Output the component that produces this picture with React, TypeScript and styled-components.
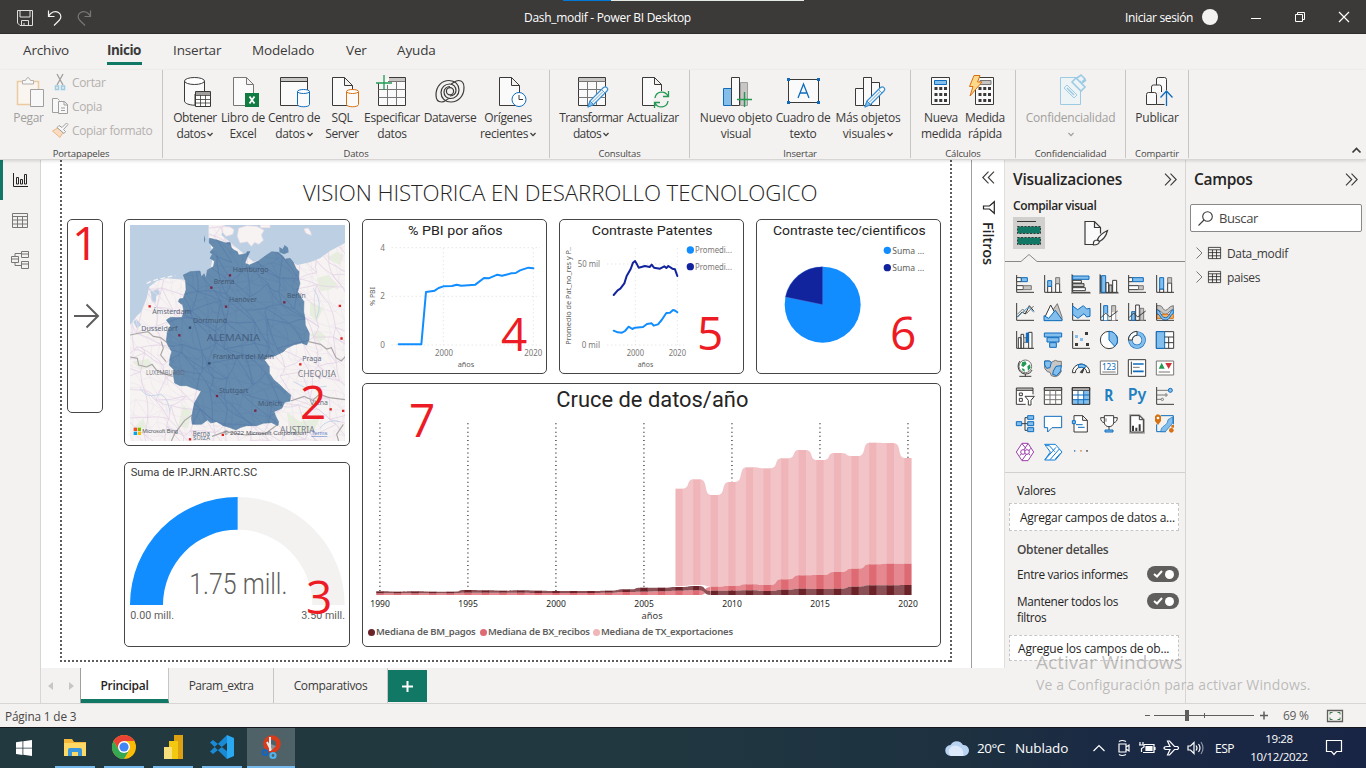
import React from 'react';
import styled, { createGlobalStyle } from 'styled-components';

const ui = '"Open Sans", "Noto Sans", sans-serif';
const din = 'Roboto, "Liberation Sans", sans-serif';
const INK = '#3b3a39';
const GREEN = '#117865';
const BLUE = '#118dff';
const NAVY = '#12239e';
const A = '#0f6cbd';
const L = '#83beec';
const G = '#797775';
const LG = '#c8c6c4';

const Global = createGlobalStyle`
  * { box-sizing: border-box; }
  body { margin: 0; overflow: hidden; font-family: ${ui}; color: #252423; background: #f3f2f1; }
  svg { display: block; flex: none; overflow: visible; }
`;

const Window = styled.div`
  position: relative; width: 1366px; height: 768px; display: flex; flex-direction: column; overflow: hidden;
`;
const Txt = styled.span<{ $s?: number; $ls?: number; $c?: string; $b?: number }>`
  font-size: ${p => p.$s ?? 12}px; letter-spacing: ${p => p.$ls ?? 0}px; color: ${p => p.$c ?? '#252423'};
  font-weight: ${p => p.$b ?? 400}; white-space: nowrap;
`;

/* ---------- title bar ---------- */
const TitleBar = styled.header`
  height: 34px; flex: none; background: #3b3a39; display: flex; align-items: center; padding: 2px 0 0 17px;
  border-bottom: 1px solid #2f2e2d; position: relative;
`;
const QuickAccess = styled.div`display: flex; gap: 14px; width: 507px;`;
const TopProgress = styled.div`
  position: absolute; top: 0; left: 563px; width: 241px; height: 1px;
  background: linear-gradient(90deg, #0078d7 48px, #e3e9e3 48px);
`;
const SignIn = styled.div`margin-left: auto; display: flex; align-items: center; gap: 9px; width: 107px;`;
const Avatar = styled.i`width: 16px; height: 16px; border-radius: 50%; background: #f3f2f1; margin-top: -1px;`;
const Controls = styled.div`display: flex; width: 134px; padding-left: 19px; gap: 34px;`;

/* ---------- ribbon ---------- */
const Tabs = styled.nav`height: 36px; flex: none; display: flex; padding-left: 23px;`;
const Tab = styled.div<{ $w: number; $on?: boolean }>`
  width: ${p => p.$w}px; margin-right: 31px; height: 31px; padding-top: 6px; line-height: 20px;
  font-size: 13.5px; letter-spacing: ${p => (p.$on ? -0.5 : -0.14)}px; white-space: nowrap;
  font-weight: ${p => (p.$on ? 700 : 400)}; color: ${INK};
  border-bottom: 3px solid ${p => (p.$on ? GREEN : 'transparent')};
`;
const Ribbon = styled.div`
  height: 90px; flex: none; display: flex; border-bottom: 1px solid #d8d6d4; position: relative; z-index: 1;
  box-shadow: 0 1px 3px rgba(0,0,0,.14);
`;
const Group = styled.section<{ $w: number; $pl?: number }>`
  width: ${p => p.$w}px; height: 88px; border-right: 1px solid #c8c6c4; display: flex; flex-direction: column;
  & > div { flex: 1; min-height: 0; display: flex; padding-left: ${p => p.$pl ?? 0}px; }
  & > footer { height: 9px; line-height: 9px; text-align: center; font-size: 9.5px; letter-spacing: -.15px; color: #484644; }
`;
const BigButton = styled.button<{ $w: number; $off?: boolean; $ls?: number }>`
  width: ${p => p.$w}px; border: 0; padding: 5px 0 0; background: none; display: flex; flex-direction: column;
  align-items: center; font: 400 12px/16px ${ui}; letter-spacing: ${p => p.$ls ?? -0.25}px; color: ${p => (p.$off ? '#a19f9d' : INK)};
  & > svg { margin-bottom: 1px; }
  & > span { display: flex; align-items: center; gap: 2px; white-space: nowrap; height: 16px; }
`;
const SmallList = styled.div`display: flex; flex-direction: column; padding: 2px 0 0 6px; gap: 3px;`;
const SmallItem = styled.div`
  display: flex; align-items: center; gap: 3px; height: 21px; font-size: 12px; letter-spacing: -.35px; color: #b3b0ad; white-space: nowrap;
`;
const Collapse = styled.div`margin-left: auto; align-self: flex-end; padding: 0 5px 5px 0;`;

/* ---------- body ---------- */
const Body = styled.main`flex: 1; min-height: 0; display: flex;`;
const Rail = styled.aside`
  width: 41px; flex: none; border-right: 1px solid #d8d6d4; display: flex; flex-direction: column; position: relative;
`;
const RailItem = styled.div<{ $on?: boolean }>`
  height: 40px; display: flex; align-items: center; justify-content: center; padding-right: ${p => (p.$on ? 3 : 0)}px;
  border-left: ${p => (p.$on ? 3 : 0)}px solid ${GREEN};
`;
const Center = styled.div`width: 964px; flex: none; display: flex; flex-direction: column;`;
const Work = styled.div`flex: 1; min-height: 0; display: flex; background: #fff;`;
const PageWrap = styled.div`width: 930px; padding-left: 19px; background: #fff; overflow: hidden;`;
const dotsX = 'repeating-linear-gradient(90deg,#605e5c 0 2px,transparent 2px 4px)';
const dotsY = 'repeating-linear-gradient(180deg,#605e5c 0 2px,transparent 2px 4px)';
const Page = styled.div`
  width: 892px; height: 502px; padding-left: 7px; display: flex; flex-direction: column;
  background: ${dotsY} 0 0/2px 100% no-repeat, ${dotsY} 100% 0/2px 100% no-repeat, ${dotsX} 0 100%/100% 2px no-repeat;
`;
const PageTitle = styled.h1`
  margin: 0; height: 59px; padding: 19px 0 0 236px; font: 300 22.3px/28px ${ui}; letter-spacing: -.1px; color: #252423; white-space: nowrap;
`;
const Board = styled.div`display: flex;`;
const Stack = styled.div<{ $gap: number; $ml: number }>`display: flex; flex-direction: column; gap: ${p => p.$gap}px; margin-left: ${p => p.$ml}px;`;
const Trio = styled.div`display: flex; gap: 12px;`;
const Card = styled.article<{ $w: number; $h: number }>`
  width: ${p => p.$w}px; height: ${p => p.$h}px; border: 1px solid #484644; border-radius: 5px; position: relative; background: #fff;
`;
const Mark = styled.b<{ $x: number; $y: number }>`
  position: absolute; left: ${p => p.$x}px; top: ${p => p.$y}px; font: 500 46px/46px ${ui}; color: #ed1c24; margin-top: -2px;
`;
const MapBox = styled.div`padding: 5px; & > svg { overflow: hidden; }`;
const ArrowBox = styled.div`height: 100%; display: flex; align-items: center; justify-content: center; padding-left: 2px;`;
const Filters = styled.aside`
  width: 34px; border-left: 1px solid #a19f9d; border-right: 1px solid #e1dfdd; background: #fff; display: flex; flex-direction: column; align-items: center; padding-top: 11px;
`;
const Vertical = styled.div`writing-mode: vertical-rl; font-size: 14.5px; font-weight: 600; letter-spacing: -.1px; margin-top: 8px; line-height: 18px;`;

const PageTabs = styled.div`height: 35px; flex: none; display: flex; background: #f3f2f1;`;
const Arrows = styled.div`width: 40px; display: flex; align-items: center; justify-content: center; gap: 16px; border-right: 1px solid #a19f9d;`;
const PageTab = styled.div<{ $w: number; $on?: boolean; $ls?: number }>`
  width: ${p => p.$w}px; border-right: 1px solid #c8c6c4; background: ${p => (p.$on ? '#fff' : 'transparent')};
  border-bottom: ${p => (p.$on ? 4 : 0)}px solid ${GREEN}; font-size: 12px; letter-spacing: ${p => p.$ls ?? -0.3}px;
  font-weight: ${p => (p.$on ? 600 : 400)}; line-height: 35px; text-align: center; color: ${p => (p.$on ? '#252423' : INK)};
`;
const AddTab = styled.button`width: 39px; margin: 2px 0 1px; padding: 0; border: 0; background: ${GREEN}; display: flex; align-items: center; justify-content: center;`;

/* ---------- side panes ---------- */
const Pane = styled.aside<{ $w: number; $last?: boolean }>`
  width: ${p => p.$w}px; flex: none; border-right: ${p => (p.$last ? 0 : 1)}px solid #d8d6d4; display: flex; flex-direction: column;
`;
const PaneHead = styled.div`height: 38px; flex: none; padding: 0 8px; display: flex; align-items: center; justify-content: space-between;`;
const BuildTabs = styled.div`display: flex; align-items: center; gap: 35px; padding: 0 0 0 8px; height: 32px; margin-top: 3px;`;
const BuildTab = styled.div<{ $on?: boolean }>`width: 32px; height: 32px; background: ${p => (p.$on ? '#d2d0ce' : 'none')}; display: flex; align-items: center; justify-content: center;`;
const VizGrid = styled.div`display: grid; grid-template-columns: repeat(6, 18px); grid-auto-rows: 18px; gap: 10px; padding: 13px 0 0 11px; height: 211px; border-bottom: 1px solid #d2d0ce;`;
const Well = styled.div<{ $h: number; $pl: number }>`
  margin: 0 6px 0 4px; height: ${p => p.$h}px; flex: none; padding-left: ${p => p.$pl}px; background: #fff; border: 1px dashed #c8c6c4;
  display: flex; align-items: center; white-space: nowrap; overflow: hidden;
`;
const Row = styled.div<{ $mt: number }>`display: flex; justify-content: space-between; align-items: flex-start; padding: 0 6px 0 12px; margin-top: ${p => p.$mt}px;`;
const Wrapped = styled.div`width: 130px; font-size: 11.8px; line-height: 16px; letter-spacing: -.33px; margin-top: -1px; margin-bottom: 1px;`;
const Toggle = styled.span`
  width: 32px; height: 16px; border-radius: 8px; background: #605e5c; display: flex; align-items: center; justify-content: space-between; padding: 0 5px 0 6px; margin-top: -1px;
  & > i { width: 9px; height: 9px; border-radius: 50%; background: #fff; }
`;
const Search = styled.div`margin: 6px 4px 9px; height: 28px; border: 1px solid #8a8886; border-radius: 2px; background: #fff; display: flex; align-items: center; gap: 6px; padding-left: 7px;`;
const Field = styled.div`height: 24px; display: flex; align-items: center; padding-left: 10px; & > svg:first-child { margin-right: 5px; } & > span { margin-left: 6px; }`;
const Watermark = styled.div`
  position: absolute; left: 1036px; top: 649px; color: rgba(150,148,146,.6); white-space: nowrap;
  & > div:first-child { font-size: 19px; line-height: 26px; letter-spacing: .03px; }
  & > div:last-child { font-size: 14px; line-height: 20px; letter-spacing: .12px; }
`;

/* ---------- status + taskbar ---------- */
const Status = styled.footer`height: 24px; flex: none; border-top: 1px solid #d8d6d4; display: flex; align-items: center; padding-left: 5px;`;
const Zoom = styled.div`margin-left: auto; display: flex; align-items: center; width: 221px;`;
const Taskbar = styled.div`
  height: 41px; flex: none; border-top: 1px solid #14181c; display: flex;
  background: linear-gradient(90deg,#22393f 0,#213840 45%,#1d3140 70%,#1a2944 82%,#192544 100%);
`;
const TaskItem = styled.div<{ $w: number; $run?: boolean; $on?: boolean; $gap?: number }>`
  width: ${p => p.$w}px; margin-left: ${p => p.$gap ?? 0}px; display: flex; align-items: center; justify-content: center;
  border-bottom: ${p => (p.$run ? 2 : 0)}px solid #76b9ed; background: ${p => (p.$on ? '#4f6268' : 'none')};
`;
const Tray = styled.div`margin-left: auto; display: flex; align-items: center; width: 421px;`;
const Clock = styled.div`width: 60px; margin-left: 14px; text-align: center; font-size: 11.5px; line-height: 18px; letter-spacing: -.35px; color: #fff;`;

const Chev = ({ c = INK }: { c?: string }) => (
  <svg width="6" height="5" viewBox="0 0 6 5" fill="none" stroke={c} strokeWidth="1.3"><path d="M.5 1 3 3.6 5.5 1" /></svg>
);
const Dbl = ({ flip }: { flip?: boolean }) => (
  <svg width="13" height="13" viewBox="0 0 13 13" fill="none" stroke={INK} strokeWidth="1.1">
    <path d={flip ? 'M6.5.7.8 6.5l5.7 5.8M12 .7 6.3 6.5l5.7 5.8' : 'M1 .7l5.7 5.8L1 12.3M6.5.7l5.7 5.8-5.7 5.8'} />
  </svg>
);

const DOC = 'M5.5 2.5h12l7 7v21h-19zM17.5 2.5v7h7';
const Pencil = () => (
  <g strokeLinejoin="round">
    <path d="M13 32l2-6L28.500 12.500c2.500-2 5.500 1 3.500 3.500L18.500 29.500z" fill="#fafafa" stroke="#3a8fd0" strokeWidth="1.200" />
    <path d="M13 32l2-6 3.500 3.500z" fill={L} stroke="#3a8fd0" />
    <path d="M26.500 14.500l3.500 3.500M17 27.500l11-11" stroke="#3a8fd0" strokeWidth=".8" />
  </g>
);
const swirl = 'M15 23.500c-3 1-4 3.500-7.500 3.500C3.500 27 2 24 2 20 2 11 8 5.500 15 5.500c6 0 10 4 10 9.500 0 5-4 8.500-8.500 8.500-4 0-6.500-3-6.500-6.500 0-3 2.500-5.500 6-5.500';
const ribbonIcons: Record<string, React.ReactNode> = {
  db: <>
    <path d="M5.500 6v20c0 2.500 5 4 9.500 4.200h1V19h9.500V6" fill="#fafafa" /><ellipse cx="15.500" cy="6" rx="10" ry="3.500" fill="#fff" />
    <path d="M16.500 16.500h15v15h-15z" fill="#fff" /><path d="M17 17h14v3H17z" fill="#a19f9d" stroke="none" /><path d="M16.500 20.500h15M16.500 24.500h15M16.500 28h15M21.500 20v11M26.500 20v11" strokeWidth=".8" />
  </>,
  excel: <><path d="M6.500 2.500h13l7 7v21h-20zM19.500 2.500v7h7" fill="#fafafa" stroke={G} /><path d="M18 18h14v14H18z" fill="#107c41" stroke="none" /><path d="M22.500 21.500l5 7M27.500 21.500l-5 7" stroke="#fff" strokeWidth="1.800" /></>,
  hub: <><path d="M2.500 2.500h27v28h-27z" fill="#fafafa" /><path d="M3 3h26v3H3z" fill={LG} stroke="none" /><path d="M2.500 6.500h27" /><path d="M19.500 16.500v13c0 3 12 3 12 0v-13" fill="#fafafa" stroke={A} /><ellipse cx="25.500" cy="16.500" rx="6" ry="2" fill="#fff" stroke={A} /></>,
  sql: <><path d="M6.500 2.500h12l8 8v20h-20zM18.500 2.500v8h8" fill="#fafafa" /><path d="M20.500 16.500v13c0 3 12 3 12 0v-13" fill="#fafafa" stroke="#d8700f" /><ellipse cx="26.500" cy="16.500" rx="6" ry="2" fill="#fff" stroke="#d8700f" /></>,
  table: <><path d="M2.500 8v22.500h27v-28H13" fill="#fafafa" /><path d="M13 3h16v3.500H13z" fill={LG} stroke="none" /><path d="M2.500 14.500h27M2.500 22.500h27M11.500 10v20M20.500 7v23M12 6.500h17" stroke={G} /><path d="M0 8h16M8 0v15" stroke="#239a52" strokeWidth="1.300" /></>,
  dv: <g strokeWidth="1.200"><path d={swirl} /><path d={swirl} transform="rotate(180 16 16.250)" /><circle cx="16" cy="16.250" r="3.600" /></g>,
  recent: <><path d="M7.500 2.500h12l8 8v20h-20zM19.500 2.500v8h8" fill="#fafafa" /><circle cx="27" cy="24.500" r="7" fill="#fff" stroke={A} /><path d="M27 20v4.500h4" /></>,
  transform: <><path d="M3.500 2.500h27v28h-27z" fill="#fafafa" /><path d="M4 3h26v3H4z" fill={LG} stroke="none" /><path d="M3.500 6.500h27M3.500 14.500h27M3.500 22.500h27M12.500 7v23M21.500 7v23" stroke={G} /><Pencil /></>,
  refresh: <><path d={DOC} fill="#fafafa" /><circle cx="24.500" cy="24.500" r="8.500" fill="#f3f2f1" stroke="none" /><path d="M18 23c1-7 10-8 13-2M31.500 16v5.500H26M31 26c-1 7-10 8-13 2M17.500 33v-5.500H23" fill="none" stroke="#239a52" strokeWidth="1.300" /></>,
  newviz: <><path d="M3.500 13.500h8v17h-8z" fill={L} stroke={A} /><path d="M20.500 7.500h7v23h-7z" fill={LG} stroke="#a19f9d" /><path d="M11.500 2.500h8v28h-8z" fill="#fafafa" /><path d="M17 24.500h15M24.500 17v15" stroke="#239a52" strokeWidth="1.400" /></>,
  textbox: <><path d="M1.500 4.500h30v23h-30z" fill="#fafafa" /><g fill={A} stroke="none"><path d="M0 3h3v3H0zM30 3h3v3h-3zM0 26h3v3H0zM30 26h3v3h-3z" /></g><path d="M11 23l5.500-14L22 23M13 18h7" fill="none" stroke={A} strokeWidth="1.300" /></>,
  more: <><path d="M3.500 13.500h8v17h-8zM19.500 7.500h8v23h-8z" fill="#fafafa" /><path d="M11.500 2.500h8v28h-8z" fill="#fafafa" /><Pencil /></>,
  calc: <><path d="M6.500 2.500h18v27h-18z" fill="#fafafa" /><path d="M9.500 5.500h12v4h-12z" fill={L} stroke={A} /><path d="M9.500 13.500h12.500M9.500 19.500h12.500M9.500 25.500h12.500" strokeWidth="3" strokeDasharray="3 1.750" /></>,
  quick: <><path d="M6.500 2.500h18v27h-18z" fill="#fafafa" /><path d="M11 5.500h11v4H11z" fill={LG} stroke={G} /><path d="M9.500 13.500h12.500M9.500 19.500h12.500M9.500 25.500h12.500" strokeWidth="3" strokeDasharray="3 1.750" /><path d="M5 .5h6L8.500 7H13L1 21l3-9.500H.5z" fill="#ffd98a" stroke="#d8700f" /></>,
  conf: <g stroke="#9ccbe3"><path d="M5.500 2.500h20v27h-20z" fill="#eef3f6" /><path d="M9 13l3-3 10 10-3 3z" fill="#eef3f6" /><path d="M12 13l7 7M17 7l4-4 9 9-4 4zM22 3l4-3 4 4-3 3M27 8l4-3" fill="#eef3f6" strokeWidth="1.600" /></g>,
  publish: <><path d="M5.500 19.500q0-2 2-2h6q2 0 2 2v10h-10zM10.500 17v-5q0-2 2-2h6q2 0 2 2v5M15.500 10V4q0-1.500 2-1.500h6q2 0 2 2V15M15.500 29.500h8" fill="#fafafa" /><path d="M25.500 31V17M19.500 22.500l6-6.500 6 6.500" fill="none" stroke={A} strokeWidth="1.300" /></>,
};
const RIcon = ({ n }: { n: string }) => <svg width="32" height="34" viewBox="0 0 32 34" stroke={INK} fill="none">{ribbonIcons[n]}</svg>;

type B = [string, number, string, string?, boolean?, number?];
const groups: { name: string; w: number; pl: number; b: B[] }[] = [
  { name: 'Datos', w: 387, pl: 8, b: [['db', 48, 'Obtener', 'datos', true, -0.45], ['excel', 48, 'Libro de', 'Excel'], ['hub', 54, 'Centro de', 'datos', true, -0.35], ['sql', 42, 'SQL', 'Server', false, -0.4], ['table', 58, 'Especificar', 'datos', false, -0.35], ['dv', 58, 'Dataverse', undefined, false, -0.45], ['recent', 58, 'Orígenes', 'recientes', true, -0.35]] },
  { name: 'Consultas', w: 140, pl: 7, b: [['transform', 68, 'Transformar', 'datos', true, -0.6], ['refresh', 56, 'Actualizar', undefined, false, -0.3]] },
  { name: 'Insertar', w: 221, pl: 8, b: [['newviz', 76, 'Nuevo objeto', 'visual'], ['textbox', 58, 'Cuadro de', 'texto', false, -0.4], ['more', 72, 'Más objetos', 'visuales', true]] },
  { name: 'Cálculos', w: 105, pl: 8, b: [['calc', 44, 'Nueva', 'medida', false, -0.4], ['quick', 44, 'Medida', 'rápida', false, -0.35]] },
  { name: 'Confidencialidad', w: 110, pl: 0, b: [['conf', 109, 'Confidencialidad', '', true]] },
  { name: 'Compartir', w: 63, pl: 0, b: [['publish', 62, 'Publicar']] },
];

/* ---------- visualization gallery, 54-unit grid ---------- */
const axis = <path d="M2 0v52h52" />;
const viz: React.ReactNode[] = [
  <>{axis}<path d="M2 8h14v12H2z" fill="#fff" /><path d="M16 8h18v12H16z" fill={L} stroke={A} /><path d="M2 32h20v12H2z" fill="#fff" /><path d="M22 32h24v12H22z" fill={LG} stroke={G} /></>,
  <>{axis}<path d="M11 34h12v18H11zM35 26h12v26H35z" fill="#fff" /><path d="M11 17h12v17H11z" fill={L} stroke={A} /><path d="M35 8h12v18H35z" fill={LG} stroke={G} /></>,
  <><g stroke="#a19f9d" strokeWidth="6"><path d="M0-2v56h56" /></g>{axis}<path d="M2 3h49v10H2z" fill={L} stroke={A} /><path d="M2 16h26v8H2zM2 38h38v9H2z" fill="#fff" /><path d="M2 26h34v9H2z" fill={LG} /></>,
  <><g stroke="#a19f9d" strokeWidth="6"><path d="M0-2v56h56" /></g>{axis}<path d="M5 2h12v50H5z" fill={L} stroke={A} /><path d="M18 23h8v29h-8zM38 16h12v36H38z" fill="#fff" /><path d="M27 30h9v22h-9z" fill={LG} /></>,
  <>{axis}<path d="M2 8h12v12H2zM2 32h30v12H2z" fill="#fff" /><path d="M14 8h32v12H14z" fill={L} stroke={A} /><path d="M32 32h14v12H32z" fill={LG} stroke={G} /></>,
  <>{axis}<path d="M11 42h12v10H11zM35 24h12v28H35z" fill="#fff" /><path d="M11 8h12v34H11z" fill={L} stroke={A} /><path d="M35 8h12v16H35z" fill={LG} stroke={G} /></>,
  <>{axis}<path d="M4 34l16-16 12 13 21-22" stroke={G} /><path d="M4 42l14-15 10 6L40 8l14 17" stroke={INK} /><path d="M4 43l17-17 17-14 15 16" stroke="#4f9bc9" /></>,
  <><path d="M26 22L40 2l14 40v10H34z" fill={LG} stroke={G} /><path d="M2 44L20 6l14 26-14 20H2z" fill="#fff" /><path d="M0 38l14 8 20-24 20 28v3H0z" fill={L} stroke={A} /></>,
  <>{axis}<path d="M2 9l15 11L34 8l10 10 10-2v24l-10 2-8-10-18 14L2 34z" fill={L} stroke={A} /></>,
  <>{axis}<path d="M11 8h12v44H11z" fill={L} stroke={A} /><path d="M35 8h12v44H35z" fill={LG} stroke={G} /><path d="M12 30h10v22H12zM36 28h10v24H36z" fill="#fff" stroke="none" /><path d="M3 44l14-14 12 12 24-18" /></>,
  <>{axis}<path d="M11 26h10v26H11z" fill={L} stroke={A} /><path d="M23 6h11v46H23z" fill="#fff" /><path d="M36 16h11v36H36z" fill={LG} stroke={G} /><path d="M3 44l14-14 12 12 24-18" /></>,
  <><path d="M2 8h10c8 0 8 14 16 14S40 8 52 8v12c-12 0-14 14-24 14S14 20 2 20z" fill={LG} stroke={G} /><path d="M2 34h50v12H2z" fill="#f7b267" stroke="#d8700f" /><path d="M2 20c12 0 12 24 26 24s14-24 24-24v12c-8 0-10 20-24 20S12 32 2 32z" fill={L} stroke={A} />{axis}</>,
  <>{axis}<path d="M7 20h8v32H7zM15 10h8v42h-8zM38 4h10v48H38z" fill="#fff" /><path d="M23 20h9v14h-9z" fill={LG} stroke={G} /><path d="M31 6h6v28h-6z" fill={A} stroke={A} /></>,
  <g fill={L} stroke={A}><path d="M1 6h52v12H1z" /><path d="M9 20h36v13H9z" /><path d="M17 35h20v14H17z" /></g>,
  <>{axis}<g stroke="none"><path d="M39 3h9v9h-9zM9 36h9v9H9zM42 36h9v9h-9z" fill={INK} /><path d="M9 12h9v9H9zM24 21h9v9h-9z" fill={L} /></g></>,
  <><circle cx="27" cy="27" r="26" fill="#fff" /><path d="M27 1a26 26 0 0 1 17 45L27 27z" fill={L} stroke={A} /></>,
  <><circle cx="27" cy="27" r="20" stroke={A} strokeWidth="13" /><circle cx="27" cy="27" r="20" stroke={L} strokeWidth="9" /><path d="M7 27A20 20 0 0 1 27 7" stroke="#fff" strokeWidth="9" /><path d="M1 27A26 26 0 0 1 27 1v12a14 14 0 0 0-14 14z" /></>,
  <><path d="M1 2h52v50H1z" fill="#fff" /><path d="M1 2h25v50H1z" fill={L} stroke={A} /><path d="M26 18h27M26 35h27M38 18v34" /></>,
  <><circle cx="28" cy="22" r="19" fill="#fff" stroke={G} /><path d="M18 10l10-3 4 8-10 9-6-4zM34 22l8-6 2 10-8 10zM17 28l8 2 2 8-8-4z" fill="#239a52" stroke="none" /><path d="M12 6C0 20 8 44 28 45c10 0 18-5 20-12M28 45v7M10 52h36" /></>,
  <><path d="M2 6h14l6 4 12-6 8 3h10v14l-4 8 4 8-8 12-10 4-12-3-4-10-8-2-8-10z" fill={LG} stroke={G} /><path d="M2 6h14l6 4-4 16-10 2-6-10zM36 22l16-2-2 16-12 14-12-4 2-10z" fill={L} stroke={A} /></>,
  <><path d="M1 41a26 26 0 0 1 52 0h-9a17 17 0 0 0-34 0z" fill="#fff" /><path d="M18 17a26 26 0 0 1 25 4l-6 7a17 17 0 0 0-16-2z" fill={L} stroke={A} /><path d="M25 40l12-14-6 16z" fill={INK} /></>,
  <><path d="M1 6h52v40H1z" fill="#fff" stroke={G} /><text x="27" y="33" textAnchor="middle" fontSize="25" fontFamily="Noto Sans" textLength="42" fill={A} stroke="none">123</text><path d="M7 39h40" stroke={G} /></>,
  <><path d="M1 2h52v50H1z" fill="#fff" /><path d="M10 8v38" /><path d="M15 15h32M15 37h32" stroke={A} strokeWidth="5" /><path d="M15 25h20" stroke={G} /></>,
  <><path d="M1 6h52v42H1z" fill="#fff" stroke={G} /><path d="M8 29l9-18 9 18z" fill="#239a52" stroke="none" /><path d="M28 12h20l-10 18z" fill="#d13438" stroke="none" /><path d="M8 39h34" stroke={G} /></>,
  <><path d="M1 2h50v50H1z" fill="#fff" stroke="none" /><path d="M1 3h50v7H1z" fill={LG} /><path d="M51 10v12M1 10v42h28M10 18h9v8h-9zM10 34h9v9h-9z" /><path d="M27 28h28L45 40v14h-8V40z" fill="#fff" /></>,
  <><path d="M1 2h52v50H1z" fill="#fff" /><path d="M1 2h52v8H1z" fill={LG} /><path d="M1 24h52M1 38h52M18 10v42M35 10v42" stroke={G} /></>,
  <><path d="M1 2h52v50H1z" fill="#fff" /><path d="M35 10h18v42H1V38h34z" fill={L} stroke="none" /><path d="M1 2h52v8H1z" fill={LG} /><path d="M1 24h52M1 38h52M18 10v42M35 10v42" stroke={A} /><path d="M1 2h52v50H1z" /></>,
  <text x="26" y="42" textAnchor="middle" fontSize="46" fontWeight="700" fontFamily="Noto Sans" textLength="27" lengthAdjust="spacingAndGlyphs" fill="#1f80c0" stroke="none">R</text>,
  <text x="27" y="38" textAnchor="middle" fontSize="46" fontWeight="600" fontFamily="Noto Sans" textLength="56" lengthAdjust="spacingAndGlyphs" fill="#1f80c0" stroke="none">Py</text>,
  <>{axis}<path d="M3 10h34M3 24h22M3 37h12" stroke={G} /><circle cx="43" cy="10" r="6" fill={L} stroke={A} /><circle cx="30" cy="24" r="3.500" stroke={G} /><circle cx="19" cy="37" r="3.500" stroke={G} /></>,
  <><path d="M17 26h10M34 8h-7v38h7M27 26h7" /><g fill={L} stroke={A}><path d="M1 20h16v12H1zM35 2h18v11H35zM35 20h18v12H35zM35 38h18v12H35z" /></g></>,
  <path d="M1 4h52v34H24L11 51V38H1z" fill="#fff" stroke={A} />,
  <><path d="M6 2h26l14 14v35H6z" fill="#fff" /><path d="M32 2v14h14" /><path d="M1 17h9v9H1z" fill={L} stroke={A} /><path d="M12 29h20M18 37h20" stroke={A} /></>,
  <><path d="M13 2h28v20c0 8-6 13-14 13s-14-5-14-13zM13 8H2c0 9 4 14 11 15M41 8h11c0 9-4 14-11 15M27 35v10" fill="#fff" /><path d="M18 10v10" stroke={G} /><path d="M15 45h24v6H15z" fill={L} stroke={A} /></>,
  <><path d="M6 0h28l14 14v40H6z" fill="#fff" stroke="#a19f9d" strokeWidth="5" /><path d="M8 2h26l12 12v37H8zM34 2v12h12" /><path d="M15 32v16M25 38v10M35 28v20" strokeWidth="6" /></>,
  <><path d="M14 2h38v26M2 28v22h28" stroke={A} /><path d="M14 50c2-22 20-14 22-36l14-8v18L28 50z" fill={L} stroke={A} strokeWidth="2" /><path d="M-3 4q8-12 18 0v14L6 30-3 18z" fill="#d8700f" stroke="none" /><circle cx="6" cy="9" r="4" fill="#fff" stroke="none" /><circle cx="46" cy="46" r="7" fill="#d8700f" stroke="none" /><path d="M46 30h8v8h-8z" fill="#d8700f" stroke="none" /></>,
  <g stroke="#9b3fa8" fill="#fff"><path d="M18 1h18l17 26-17 26H18L1 27z" /><path d="M36 2L12 38M18 52l26-36M18 2l12 15M42 37l-9-12" fill="none" /><circle cx="21" cy="27" r="7" /><circle cx="33" cy="27" r="7" /></g>,
  <g stroke="#117dd6" fill="#fff"><path d="M2 4h32l20 23-20 24H2l17-24z" /><path d="M4 8h12l16 18M4 49l32-36M18 50l28-32M34 48L50 30" /></g>,
  <g stroke="none"><path d="M6 21h4v5H6z" fill="#5b88b8" /><path d="M25 21h4v5h-4z" fill="#c98a4b" /><path d="M43 21h4v5h-4z" fill={INK} /></g>,
];

/* ---------- map ---------- */
const germany = 'M628 250L640 252 660 258 678 264 690 262 694 278 702 285 712 290 716 300 738 296 742 290 750 290 742 305 735 325 748 330 760 325 775 318 800 300 815 290 835 292 845 300 856 312 870 310 880 322 888 340 897 350 896 370 900 385 893 410 905 430 912 440 911 470 915 490 916 510 928 535 927 555 920 570 905 564 880 570 860 580 850 590 830 600 818 605 800 607 794 616 808 635 808 655 822 675 840 690 855 705 872 720 870 738 854 742 845 760 822 770 828 786 836 800 833 812 815 803 790 805 770 812 740 812 720 818 708 825 690 818 670 812 650 800 632 804 622 795 605 808 577 808 574 790 583 745 592 728 604 708 580 700 560 692 540 692 524 684 520 660 522 645 508 630 510 608 515 590 506 574 499 558 502 530 512 512 499 495 512 487 545 488 552 472 548 450 535 440 538 432 550 430 558 405 557 380 550 360 570 350 600 348 604 366 612 356 618 370 622 345 640 335 644 318 630 310 637 298 630 292 641 278 628 264z';
const land = 'M390 510L410 484 424 470 440 430 448 395 470 378 500 370 552 374 620 400 640 300 626 250 626 210 674 210 664 240 690 262 760 320 840 300 892 330 930 322 960 310 990 288 1035 264 1035 858 390 858z';
const mesh = (step: number, seed: number) => {
  const r = (i: number, j: number, k: number) => { const v = Math.sin(i * 127.1 + j * 311.7 + k * 74.7 + seed) * 43758.5453; return v - Math.floor(v); };
  const pt = (i: number, j: number) => [380 + i * step + (r(i, j, 1) - 0.5) * step * 0.9, 200 + j * step + (r(i, j, 2) - 0.5) * step * 0.9];
  let d = '';
  for (let i = 0; i * step < 680; i++) for (let j = 0; j * step < 680; j++) {
    const [x, y] = pt(i, j);
    [[1, 0], [0, 1], [1, 1]].forEach(([a, b], k) => {
      if (r(i, j, 5 + k) < 0.28) return;
      const [u, v] = pt(i + a, j + b);
      d += `M${x.toFixed(1)} ${y.toFixed(1)}Q${((x + u) / 2 + (r(i, j, 9) - 0.5) * 18).toFixed(1)} ${((y + v) / 2 + (r(i, j, 11) - 0.5) * 18).toFixed(1)} ${u.toFixed(1)} ${v.toFixed(1)}`;
    });
  }
  return d;
};
const roads = mesh(52, 3);
const fineRoads = mesh(34, 8);
const cities: [number, number, string, number, number, number][] = [
  [690, 361, 'Hamburgo', 698, 350, 108], [634, 398, 'Brema', 641, 387, 63], [853, 442, 'Berlín', 861, 429, 56], [678, 455, 'Hanóver', 687, 441, 84],
  [449, 454, 'Ámsterdam', 457, 476, 116], [570, 518, 'Dortmund', 579, 505, 102], [538, 541, 'Dusseldorf', 424, 529, 108], [628, 625, 'Frankfurt del Main', 638, 611, 184],
  [901, 628, 'Praga', 907, 617, 57], [651, 723, 'Stuttgart', 657, 713, 88], [766, 767, 'Múnich', 774, 753, 72], [992, 763, 'Viena', 930, 750, 54], [570, 853, 'Berna', 578, 842, 52],
];
const MapVisual = () => (
  <svg width="215" height="216" viewBox="390 210 645 648">
    <defs><clipPath id="de"><path d={germany} /></clipPath><clipPath id="land"><path d={land} /></clipPath></defs>
    <rect x="390" y="210" width="645" height="648" fill="#bdcfe3" />
    <path d={land} fill="#f6f3f2" />
    <path d="M668 214l22 2 12 8-4 14-20 6-10-12zM716 220l24-8 30 2 22 12-8 14 6 16-14 12-12-6-10 12-12-14-22 4-8-20zM780 210h30v8h-28zM912 222l12-3 8 12 2 10-16-6z" fill="#f6f3f2" stroke="#eadbe6" strokeWidth="2" />
    <path d="M445 398l8 18 2 22 12 6 2-22 14-6-8-14-18 6zM400 500l10-8 14 18-14 10zM392 372l60-20 90-8" fill="#bdcfe3" />
    <path d="M440 385l16-7 20-6 12-2 24-6 14-2" stroke="#f6f3f2" strokeWidth="4" fill="none" strokeDasharray="14 8" />
    <g fill="#e6eedd"><path d="M950 370l34-10 30 30-24 14-30 4zM930 540l30 20 20-14-24-20zM550 750l24 20-10 50-30-6zM860 770l40 30 60-10-20 40-70 4zM395 620l30 24 34-10-14-22zM980 310l30-20 20 10-10 30zM400 820l30-30 10 30zM930 440l40 20-20 40-20-20z" /></g>
    <g clipPath="url(#land)" fill="none">
      <path d={fineRoads} stroke="#efe6ef" strokeWidth="2" /><path d={roads} stroke="#e2d0e6" strokeWidth="2.200" />
      <path d="M420 700q20 30 50 20t40 50M940 400q30 40 10 90M880 680l40 20 60-6M960 820q20-30 60-20" stroke="#bcd3e6" strokeWidth="2.500" />
    </g>
    <g fill="none" stroke="#aaa7a6" strokeWidth="3.500"><path d="M390 540l30-6 24-4 16 14 22 4 18 14 8 14M390 606l22 4 4 20 24 6 16-8 14 18 22 10 26 8M484 560l6 20-8 20 16 20M926 560l36 8 18 14 14-4 14 30 16 10 14-16M872 738l40-14 26 12 20-18 30 10 47 6M604 708l-10 60-40 28-30 40-10 22M836 806l-40 30-60 4-60-10-40 14M1016 858l-6-20 20-30" /></g>
    <path d={germany} fill="#658baf" stroke="#5b7fa3" strokeWidth="1.500" />
    <path d="M838 276l10 6 6-12 10 8 2 14-14 6-14-6zM612 240l4 14-4 10z" fill="#658baf" />
    <g clipPath="url(#de)" fill="none"><path d={fineRoads} stroke="#6085ac" strokeWidth="2" /><path d={roads} stroke="#587ba8" strokeWidth="2.200" /></g>
    <g fontFamily="Noto Sans" fontSize="21" fill="#3d4f66" opacity=".82">
      {cities.map(([, , t, x, y, w]) => <text key={t} x={x} y={y} textLength={w} lengthAdjust="spacingAndGlyphs">{t}</text>)}
      <text x="580" y="856" fontSize="18" textLength="50" lengthAdjust="spacingAndGlyphs">SUIZA</text>
      <g fill="#5d6470"><text x="620" y="557" fontSize="28" textLength="160" lengthAdjust="spacingAndGlyphs" fill="#3f5674">ALEMANIA</text>
        <text x="893" y="665" fontSize="25" textLength="115" lengthAdjust="spacingAndGlyphs">CHEQUIA</text>
        <text x="840" y="834" fontSize="24" textLength="104" lengthAdjust="spacingAndGlyphs">AUSTRIA</text>
        <text x="438" y="660" fontSize="19" textLength="116" lengthAdjust="spacingAndGlyphs">LUXEMBURGO</text></g>
    </g>
    {cities.map(([x, y, t]) => <rect key={t} x={x - 3.5} y={y - 3.5} width="7" height="7" fill={['Dortmund', 'Frankfurt del Main'].includes(t) ? '#2f4a6b' : x < 460 || x > 890 || y > 800 ? '#e02020' : '#7a2342'} />)}
    <path d="M1016 449h7v7h-7zM1021 547h7v7h-7zM1026 764h7v7h-7zM665 836h7v7h-7z" fill="#e02020" />
    <path d="M401 818h10v10h-10z" fill="#f25022" /><path d="M413 818h10v10h-10z" fill="#7fba00" /><path d="M401 830h10v10h-10z" fill="#00a4ef" /><path d="M413 830h10v10h-10z" fill="#ffb900" />
    <g fontFamily="Liberation Sans" fontSize="17" fill="#50565e">
      <text x="427" y="834" textLength="107" lengthAdjust="spacingAndGlyphs">Microsoft Bing</text>
      <text x="671" y="840" textLength="248" lengthAdjust="spacingAndGlyphs">© 2022 Microsoft Corporation</text>
      <text x="934" y="840" textLength="48" lengthAdjust="spacingAndGlyphs" fill="#5b7fc4" textDecoration="underline">Terms</text>
    </g>
  </svg>
);

const T = (p: { x: number; y: number; w: number; s: number; c?: string; f?: string; b?: number; children: string }) => (
  <text x={p.x} y={p.y} fontSize={p.s} fill={p.c ?? '#605e5c'} fontFamily={p.f ?? 'Noto Sans'} fontWeight={p.b ?? 400}
    textLength={p.w} lengthAdjust="spacingAndGlyphs">{p.children}</text>
);
const grid = { stroke: '#d6d4d2', strokeWidth: 2.5, strokeDasharray: '3 9', fill: 'none' };

const Pbi = () => (
  <svg width="183" height="153" viewBox="24 165 549 459">
    <T x={159} y={210} w={284} s={40} c="#252423" f={din}>% PBI por años</T>
    <path d="M110 248h445M110 394h445M110 540h445M265 250v290M535 250v290" {...grid} />
    <T x={76} y={257} w={14} s={26} c="#7a7876">4</T><T x={76} y={403} w={14} s={26} c="#7a7876">2</T><T x={76} y={549} w={14} s={26} c="#7a7876">0</T>
    <T x={240} y={572} w={54} s={26} c="#7a7876">2000</T><T x={508} y={572} w={54} s={26} c="#7a7876">2020</T>
    <T x={308} y={606} w={50} s={22}>años</T>
    <g transform="translate(60 422) rotate(-90)"><T x={0} y={0} w={56} s={21}>% PBI</T></g>
    <path d="M131 538H199L213 381 239 377 251 369 265 364 291 363 305 359 319 362 361 359 387 339 401 340 427 329 441 332 469 325 482 324 495 316 520 308 535 310" fill="none" stroke={BLUE} strokeWidth="6" strokeLinejoin="round" strokeLinecap="round" />
  </svg>
);
const Patentes = () => (
  <svg width="183" height="153" viewBox="615 165 549 459">
    <T x={710} y={210} w={363} s={40} c="#252423" f={din}>Contraste Patentes</T>
    <path d="M757 297h212M757 540h230M841 250v290M967 250v290" {...grid} />
    <T x={668} y={306} w={67} s={25} c="#7a7876">50 mil</T><T x={680} y={549} w={55} s={25} c="#7a7876">0 mil</T>
    <T x={815} y={572} w={52} s={25} c="#7a7876">2000</T><T x={941} y={572} w={52} s={25} c="#7a7876">2020</T>
    <T x={848} y={606} w={47} s={22}>años</T>
    <g transform="translate(649 539) rotate(-90)"><T x={0} y={0} w={293} s={22}>Promedio de Pat_no_res y P..</T></g>
    <circle cx="1006" cy="255" r="11" fill={BLUE} /><circle cx="1006" cy="305" r="11" fill={NAVY} />
    <T x={1020} y={264} w={111} s={25} c="#7a7876">Promedi...</T><T x={1020} y={314} w={111} s={25} c="#7a7876">Promedi...</T>
    <g fill="none" strokeWidth="6" strokeLinejoin="round" strokeLinecap="round">
      <path stroke={NAVY} d="M776 390L788 376 796 371 808 355 815 333 827 312 834 293 840 288 846 298 851 308 870 303 884 306 890 299 897 308 915 311 928 304 934 309 940 303 952 311 960 313 967 333" />
      <path stroke={BLUE} d="M776 497L788 502 801 503 810 498 821 485 832 492 840 488 864 486 876 477 890 475 896 482 909 478 920 465 934 444 945 443 954 435 961 437 967 442" />
    </g>
  </svg>
);
const Pie = () => (
  <svg width="183" height="153" viewBox="51 165 549 459">
    <T x={99} y={210} w={458} s={40} c="#252423" f={din}>Contraste tec/cientificos</T>
    <circle cx="248" cy="419" r="114" fill={BLUE} /><path d="M248 419V305A114 114 0 0 0 136 396z" fill={NAVY} stroke="#6f8fd8" strokeWidth="1" />
    <circle cx="442" cy="256" r="11" fill={BLUE} /><circle cx="442" cy="308" r="11" fill={NAVY} />
    <T x={457} y={267} w={96} s={28}>Suma ...</T><T x={457} y={318} w={96} s={28}>Suma ...</T>
  </svg>
);
const Gauge = () => (
  <svg width="224" height="183" viewBox="375 39 672 549">
    <T x={392} y={79} w={380} s={33} c="#3b3a39" f={din}>Suma de IP.JRN.ARTC.SC</T>
    <path d="M713 141a321 323 0 0 1 321 324h-97A224 226 0 0 0 713 239z" fill="#f3f2f1" />
    <path d="M713 141a322 323 0 0 0-323 324h99A224 226 0 0 1 713 239z" fill={BLUE} />
    <T x={568} y={432} w={294} s={88} c="#605e5c" f={din} b={300}>1.75 mill.</T>
    <T x={391} y={507} w={131} s={33} c="#605e5c" f={din}>0.00 mill.</T><T x={904} y={507} w={131} s={33} c="#605e5c" f={din}>3.50 mill.</T>
  </svg>
);

const base = 645;
const tx = [326, 298, 345, 306, 262, 265, 235, 210, 240, 219, 228, 188, 189, 234];
const bx = [618, 615, 620, 618, 613, 615, 598, 586, 585, 576, 566, 553, 551, 551];
const bm = [645, 645, 632, 632, 631, 633, 629, 626, 627, 626, 620, 616, 616, 615];
const eTop = [634, 635, 634, 635, 635, 630, 631, 632, 631, 632, 633, 633, 633, 632, 628, 623, 623, 621, 618];
const eMid = [640, 640, 640, 640, 640, 638, 638, 638, 638, 639, 639, 639, 639, 638, 636, 635, 634, 632, 631];
const band = (top: number[], bot: number[], y0: number, dark: string, light: string) => top.map((t, i) => {
  const x = 65 + 46 * (y0 + i), b = bot[i];
  const n = top[i + 1], nb = bot[i + 1];
  return (
    <g key={i}>
      {n !== undefined && <path d={`M${x + 8} ${t}C${x + 31} ${t} ${x + 17} ${n} ${x + 38} ${n}V${nb}C${x + 17} ${nb} ${x + 31} ${b} ${x + 8} ${b}z`} fill={light} />}
      <rect x={x - 9.5} y={t} width="19" height={b - t} fill={dark} />
    </g>
  );
});
const Cruce = () => (
  <svg width="577" height="262" viewBox="20.900 12 1507.900 786" preserveAspectRatio="none">
    <T x={526} y={81} w={502} s={64} c="#252423" f={din}>Cruce de datos/año</T>
    {[0, 5, 10, 15, 20, 25, 30].map(i => (
      <g key={i}>
        <path d={`M${65 + i * 46} 130V645`} stroke="#605e5c" strokeWidth="4.500" strokeDasharray="3 9.500" />
        <T x={40 + i * 46} y={681} w={51} s={29} c="#252423">{String(1990 + i)}</T>
      </g>
    ))}
    {band(tx, bx, 17, '#efb5b9', '#f2c4c8')}
    {band(bx.slice(2), bm.slice(2), 19, '#de6a73', '#e5888f')}
    {band(bm.slice(2), bm.slice(2).map(() => base), 19, '#6b2329', '#8a5055')}
    {band(eMid, eMid.map(() => base), 0, '#de6a73', '#e5888f')}
    {band(eTop, eMid, 0, '#6b2329', '#8a5055')}
    <path d="M899 631c20 0 14-8 30-11v12c-16 2-12 13-30 13z" fill="#e5888f" /><path d="M899 618c20 0 8 14 30 15v12c-20 0-10-14-30-14z" fill="#8a5055" />
    <T x={749} y={718} w={55} s={26} c="#3b3a39">años</T>
  </svg>
);
const Legend = styled.div`position: absolute; left: 5px; bottom: 8px; display: flex; gap: 5px; height: 12px; align-items: center;
  font: 600 9.5px/12px "Noto Sans", sans-serif; letter-spacing: -.22px; color: #605e5c; white-space: nowrap;`;
const LegendItem = styled.span<{ $c: string; $w: number }>`display: flex; align-items: center; gap: 1px; width: ${p => p.$w}px;
  &::before { content: ''; width: 7px; height: 7px; border-radius: 50%; background: ${p => p.$c}; flex: none; }`;

const TableGlyph = ({ w, h, c }: { w: number; h: number; c: string }) => (
  <svg width={w} height={h} viewBox="0 0 16 15" fill="none" stroke={c} preserveAspectRatio="none"><path d="M.5.500h15v14H.500zM.500 3.500h15M.500 7h15M.500 11h15M5.500 3.500v11M10.500 3.500v11" /></svg>
);

export default function App() {
  return (
    <Window>
      <Global />
      <TitleBar>
        <TopProgress />
        <QuickAccess>
          <svg width="16" height="16" viewBox="0 0 16 16" fill="none" stroke="#e1dfdd"><path d="M.5.500h15v15H3l-2.500-2.500zM3 .5v6.500h10V.5M4.500 15.500v-5h7v5M7 13v2.500" /></svg>
          <svg width="16" height="16" viewBox="0 0 16 16" fill="none" stroke="#f3f2f1" strokeWidth="1.200"><path d="M1.500.500v6h6M1.700 6C4 2 8 .5 11.500 2.500c3.500 2.500 2.500 5.500 1 7.500L7 15.500" /></svg>
          <svg width="16" height="16" viewBox="0 0 16 16" fill="none" stroke="#797775" strokeWidth="1.200"><path d="M13.500.500v6h-6M13.300 6C11 2 7 .5 3.500 2.500 0 5 1 8 2.500 10L8 15.500" /></svg>
        </QuickAccess>
        <Txt $s={12} $ls={-0.3} $c="#fff">Dash_modif - Power BI Desktop</Txt>
        <SignIn><Txt $s={12} $ls={-0.35} $c="#fff">Iniciar sesión</Txt><Avatar /></SignIn>
        <Controls>
          <svg width="10" height="11" viewBox="0 0 10 11" stroke="#fff"><path d="M0 6.500h10" /></svg>
          <svg width="10" height="10" viewBox="0 0 10 10" stroke="#fff" fill="none"><path d="M.5 2.500h7v7h-7zM2.500 2.500v-2h7v7h-2" /></svg>
          <svg width="10" height="10" viewBox="0 0 10 10" stroke="#fff" strokeWidth="1.200"><path d="M0 0l10 10M10 0L0 10" /></svg>
        </Controls>
      </TitleBar>
      <Tabs>
        <Tab $w={53}>Archivo</Tab><Tab $w={35} $on>Inicio</Tab><Tab $w={48}>Insertar</Tab><Tab $w={63}>Modelado</Tab><Tab $w={20}>Ver</Tab><Tab $w={40}>Ayuda</Tab>
      </Tabs>
      <Ribbon>
        <Group $w={163} $pl={11}>
          <div>
            <BigButton $w={35} $off $ls={-0.35}>
              <svg width="32" height="34" viewBox="-1 0 32 34" fill="none"><path d="M3.500 6.500h21v23h-21z" fill="#faf5ee" stroke="#ecc9a0" strokeWidth="1.500" /><path d="M8.500 9V5.500h3q2.500-6 5 0h3V9z" fill="#f8f8f8" stroke="#b3b0ad" /><path d="M16.500 14.500h13v17h-13z" fill="#f8f8f8" stroke="#a19f9d" /></svg>
              <span>Pegar</span>
            </BigButton>
            <SmallList>
              <SmallItem><svg width="17" height="17" viewBox="0 0 17 17" fill="none" stroke="#a19f9d"><path d="M5 0l6 11M11 0L5 11" strokeWidth="1.300" /><path d="M3.500 12h3v3.500h-3zM9.500 12h3v3.500h-3z" stroke="#9ccbe3" strokeWidth="1.500" /></svg>Cortar</SmallItem>
              <SmallItem><svg width="17" height="17" viewBox="0 0 17 17" fill="#f8f8f8" stroke="#a19f9d"><path d="M6 14.500H.5V.5h5l2 2M6.500 3.500h6l3 3v9h-9zM12 3.500V7h4M9 10h4M9 12.500h4" /></svg>Copia</SmallItem>
              <SmallItem><svg width="17" height="17" viewBox="0 0 17 17" fill="#f8f8f8" stroke="#a19f9d"><path d="M2 8L.5 9 8 15.500l3-5L6 6z" stroke="#ecb98a" fill="#f9dcc0" /><path d="M5 5.500l7 6 1.500-2-2-2L16 2.500 14.500 1 10 5.500 7 3.500z" /></svg>Copiar formato</SmallItem>
            </SmallList>
          </div>
          <footer>Portapapeles</footer>
        </Group>
        {groups.map(g => (
          <Group key={g.name} $w={g.w} $pl={g.pl}>
            <div>{g.b.map(([ic, w, a, b, ch, ls]) => (
              <BigButton key={a} $w={w} $off={ic === 'conf'} $ls={ls}>
                <RIcon n={ic} /><span>{a}</span>
                {b !== undefined && <span>{b}{ch && <Chev c={ic === 'conf' ? '#a19f9d' : INK} />}</span>}
              </BigButton>))}
            </div>
            <footer>{g.name}</footer>
          </Group>
        ))}
        <Collapse><svg width="9" height="7" viewBox="0 0 9 7" fill="none" stroke={INK} strokeWidth="1.700"><path d="M.5 5.500l4-4 4 4" /></svg></Collapse>
      </Ribbon>

      <Body>
        <Rail>
          <RailItem $on><svg width="15" height="14" viewBox="0 0 15 14" fill="none" stroke="#252423"><path d="M.5 0v13.500H15M3.500 4.500h2v6.500h-2zM7.500 6.500h2V11h-2zM11.500 1.500h2V11h-2z" /></svg></RailItem>
          <RailItem><TableGlyph w={16} h={15} c={G} /></RailItem>
          <RailItem><svg width="18" height="18" viewBox="0 0 18 18" fill="none" stroke={G}><path d="M.5 5.500h7v6h-7zM.5 8h7M10.500.500h7v6h-7zM10.500 3h7M10.500 10.500h7v7h-7zM10.500 13h7M4 5.500V2.500h6.500M4 11.500v3h6.500" /></svg></RailItem>
        </Rail>
        <Center>
          <Work>
            <PageWrap>
              <Page>
                <PageTitle>VISION HISTORICA EN DESARROLLO TECNOLOGICO</PageTitle>
                <Board>
                  <Card $w={36} $h={194}>
                    <ArrowBox><svg width="25" height="24" viewBox="0 0 25 24" fill="none" stroke="#605e5c" strokeWidth="2"><path d="M0 12h24M12.500.500L24 12 12.500 23.500" /></svg></ArrowBox>
                    <Mark $x={4} $y={1}>1</Mark>
                  </Card>
                  <Stack $gap={16} $ml={21}>
                    <Card $w={226} $h={227}><MapBox><MapVisual /></MapBox><Mark $x={175} $y={160}>2</Mark></Card>
                    <Card $w={226} $h={185}><Gauge /><Mark $x={181} $y={112}>3</Mark></Card>
                  </Stack>
                  <Stack $gap={9} $ml={12}>
                    <Trio>
                      <Card $w={185} $h={155}><Pbi /><Mark $x={138} $y={92}>4</Mark></Card>
                      <Card $w={185} $h={155}><Patentes /><Mark $x={137} $y={91}>5</Mark></Card>
                      <Card $w={185} $h={155}><Pie /><Mark $x={133} $y={91}>6</Mark></Card>
                    </Trio>
                    <Card $w={579} $h={264}>
                      <Cruce />
                      <Legend>
                        <LegendItem $c="#6b2329" $w={107}>Mediana de BM_pagos</LegendItem>
                        <LegendItem $c="#de6a73" $w={108}>Mediana de BX_recibos</LegendItem>
                        <LegendItem $c="#efb5b9" $w={150}>Mediana de TX_exportaciones</LegendItem>
                      </Legend>
                      <Mark $x={46} $y={14}>7</Mark>
                    </Card>
                  </Stack>
                </Board>
              </Page>
            </PageWrap>
            <Filters>
              <Dbl flip />
              <svg width="12" height="13" viewBox="-1 0 12 13" fill="none" stroke="#252423" strokeWidth="1.200" style={{ marginTop: 17 }}><path d="M11.300.700v11.600L6.500 8H.5V5h6z" /></svg>
              <Vertical>Filtros</Vertical>
            </Filters>
          </Work>
          <PageTabs>
            <Arrows>
              <svg width="5" height="8" viewBox="0 0 5 8" fill="#c8c6c4"><path d="M5 0v8L0 4z" /></svg>
              <svg width="5" height="8" viewBox="0 0 5 8" fill="#c8c6c4"><path d="M0 0v8l5-4z" /></svg>
            </Arrows>
            <PageTab $w={88} $on>Principal</PageTab><PageTab $w={105} $ls={-0.55}>Param_extra</PageTab><PageTab $w={114} $ls={-0.33}>Comparativos</PageTab>
            <AddTab><svg width="11" height="11" viewBox="0 0 11 11" stroke="#fff" strokeWidth="2"><path d="M5.500 0v11M0 5.500h11" /></svg></AddTab>
          </PageTabs>
        </Center>
        <Pane $w={181}>
          <PaneHead><Txt $s={15.5} $b={600} $ls={-0.28}>Visualizaciones</Txt><Dbl /></PaneHead>
          <Txt $s={12} $b={600} $ls={-0.4} style={{ lineHeight: '16px', paddingLeft: 8 }}>Compilar visual</Txt>
          <BuildTabs>
            <BuildTab $on><svg width="24" height="24" viewBox="0 0 24 24"><path d="M0 .5h19" stroke={INK} /><path d="M.500 5.500h23v7H.500zM.500 16.500h23v7H.500z" fill={GREEN} stroke={INK} strokeDasharray="2 1.500" /></svg></BuildTab>
            <BuildTab><svg width="25" height="25" viewBox="0 0 25 25" fill="none" stroke={INK} strokeWidth="1.200"><path d="M9 23.500H1V.500h9.500l6 6v6M10.500.500v6h6" fill="#fafafa" /><path d="M23.500 9.500c-4 2-9 6-10 9l2 2c4-2 7-7 8-11zM13 19c-3 0-4 2-3.500 5 3 0 5.500-1 6-3.500z" fill="#fafafa" /></svg></BuildTab>
          </BuildTabs>
          <svg width="180" height="13" viewBox="0 0 180 13" fill="none" stroke="#8a8886"><path d="M0 12.500h16l8-7 8 7h148" /></svg>
          <VizGrid>{viz.map((v, i) => <svg key={i} width="18" height="18" viewBox="0 0 54 54" fill="none" stroke={INK} strokeWidth="3">{v}</svg>)}</VizGrid>
          <Txt $s={11.8} $ls={-0.3} style={{ margin: '9px 0 5px 12px', lineHeight: '16px' }}>Valores</Txt>
          <Well $h={28} $pl={10}><Txt $s={12} $ls={-0.24}>Agregar campos de datos a...</Txt></Well>
          <Txt $s={12} $b={600} $ls={-0.35} $c="#484644" style={{ margin: '11px 0 0 12px', lineHeight: '16px' }}>Obtener detalles</Txt>
          <Row $mt={9}><Wrapped>Entre varios informes</Wrapped><Toggle><svg width="10" height="8" viewBox="0 0 10 8" fill="none" stroke="#fff" strokeWidth="2"><path d="M1 4l3 2.500L9 1" /></svg><i /></Toggle></Row>
          <Row $mt={11}><Wrapped>Mantener todos los<br />filtros</Wrapped><Toggle><svg width="10" height="8" viewBox="0 0 10 8" fill="none" stroke="#fff" strokeWidth="2"><path d="M1 4l3 2.500L9 1" /></svg><i /></Toggle></Row>
          <Row $mt={9} />
          <Well $h={26} $pl={8}><Txt $s={12} $ls={-0.2}>Agregue los campos de ob...</Txt></Well>
        </Pane>
        <Pane $w={180} $last>
          <PaneHead><Txt $s={15.5} $b={600} $ls={-0.3}>Campos</Txt><Dbl /></PaneHead>
          <Search><svg width="15" height="15" viewBox="0 0 15 15" fill="none" stroke={INK} strokeWidth="1.100"><circle cx="9.500" cy="5.500" r="4.800" /><path d="M6 9L.5 14.500" /></svg><Txt $s={13} $ls={-0.4} $c="#484644">Buscar</Txt></Search>
          {['Data_modif', 'paises'].map(f => (
            <Field key={f}><svg width="7" height="12" viewBox="0 0 7 12" fill="none" stroke={G}><path d="M.5.500l5.500 5.500-5.500 5.500" /></svg><TableGlyph w={13} h={12} c="#252423" /><Txt $s={12} $ls={-0.35} $c={INK}>{f}</Txt></Field>
          ))}
        </Pane>
      </Body>

      <Status>
        <Txt $s={11.8} $ls={-0.15} $c="#484644">Página 1 de 3</Txt>
        <Zoom>
          <svg width="120" height="13" viewBox="0 0 120 13" stroke="#605e5c"><path d="M0 6.500h5M9 6.500h100M59.500 4v5" /><path d="M42 1v11" strokeWidth="4" /><path d="M115 6.500h8M119 2.500v8" strokeWidth="1.500" /></svg>
          <Txt $s={12} $ls={-0.3} $c="#605e5c" style={{ marginLeft: 18, width: 44 }}>69 %</Txt>
          <svg width="16" height="12" viewBox="0 0 16 12" fill="none" stroke="#605e5c"><path d="M.500.500h15v11H.500z" strokeWidth="1.300" /><path d="M3 4.500v-2h2.500M10.500 2.500H13v2M3 7.500v2h2.500M10.500 9.500H13v-2" stroke="#3d7a4d" /></svg>
        </Zoom>
      </Status>
      <Taskbar>
        <TaskItem $w={48}><svg width="16" height="16" viewBox="0 0 16 16" fill="#fff"><path d="M0 2.300l6.500-1v6.400H0zM7.300 1.200L16 0v7.700H7.300zM0 8.500h6.500V15L0 14zM7.300 8.500H16V16l-8.700-1.200z" /></svg></TaskItem>
        <TaskItem $w={40} $gap={7} $run><svg width="22" height="19" viewBox="0 0 22 19"><path d="M0 1h8l2 3h12v14H0z" fill="#f5b93a" /><path d="M0 5h22v13H0z" fill="#ffd966" /><path d="M4 18v-6q0-2 2-2h10q2 0 2 2v6h-4v-4H8v4z" fill="#3a96dd" /></svg></TaskItem>
        <TaskItem $w={40} $gap={9} $run><svg width="24" height="24" viewBox="0 0 24 24"><circle cx="12" cy="12" r="12" fill="#fbbc05" /><path d="M12 6h10.400A12 12 0 0 0 1.600 6L6.800 15z" fill="#ea4335" /><path d="M1.600 6A12 12 0 0 0 12 24l5.200-9H6.800z" fill="#34a853" /><circle cx="12" cy="12" r="6" fill="#fff" /><circle cx="12" cy="12" r="4.600" fill="#4285f4" /></svg></TaskItem>
        <TaskItem $w={40} $gap={9} $run><svg width="19" height="24" viewBox="0 0 19 24"><path d="M10 0h9v24h-9z" fill="#dca011" /><path d="M5 6h9v18H5z" fill="#f2c811" /><path d="M0 12h8v12H0z" fill="#f7df7c" /></svg></TaskItem>
        <TaskItem $w={40} $gap={9} $run><svg width="24" height="24" viewBox="0 0 24 24"><path d="M18 7L3 19 0 16.500 17 0zM18 17L3 5 0 7.500 17 24z" fill="#1a8ad4" /><path d="M17 0l7 3v18l-7 3z" fill="#29a9f2" /></svg></TaskItem>
        <TaskItem $w={48} $gap={5} $run $on><svg width="20" height="24" viewBox="0 0 20 24" fill="none"><circle cx="11" cy="9" r="6.500" stroke="#d83b1a" strokeWidth="4.500" /><path d="M7 8l8 3-5 5z" fill="#8a9094" /><path d="M9 2v14M6 7l4 8" stroke="#e8e8e8" strokeWidth="2" /><circle cx="4" cy="17.500" r="2.500" stroke="#1565c0" strokeWidth="2.200" /><circle cx="12" cy="20.500" r="2.500" stroke="#4fb3ef" strokeWidth="2.200" /></svg></TaskItem>
        <Tray>
          <svg width="25" height="17" viewBox="0 0 25 17"><path d="M6 16a5.500 5.500 0 0 1-.5-11A7 7 0 0 1 18 5a5.500 5.500 0 0 1 1 11z" fill="#b9d3f3" /><path d="M6 16a5.500 5.500 0 0 1 0-9 8 8 0 0 1 12 9z" fill="#dceafb" /></svg>
          <Txt $s={13.5} $ls={-0.5} $c="#fff" style={{ marginLeft: 7, width: 38 }}>20°C</Txt>
          <Txt $s={13.5} $ls={-0.1} $c="#fff" style={{ width: 78 }}>Nublado</Txt>
          <svg width="112" height="18" viewBox="0 0 112 18" fill="none" stroke="#fff" strokeWidth="1.200">
            <path d="M.5 12l5.500-5.500 5.500 5.500" />
            <path d="M26 5h7v8h-7zM33 8l3-2v6l-3-2M26 2.500q3-2 7 0M26 15.500q3 2 7 0" />
            <path d="M51 5.500h10v8H50M62 8v3" /><path d="M53 7.500h6v4h-6z" fill="#fff" /><path d="M47 3v3M50 3v3M46 6h5v2l-2.500 1.500V13" />
            <path d="M71 9q0-1.500 3-1.500h3L74.500 2h2l5 5.500h3q2 1.500 0 3h-3l-5 5.500h-2l2.500-5.500h-3q-3 0-3-1.500z" />
            <path d="M95 7h2.500L101 3.500v11L97.500 11H95zM103 6.500q2 2.500 0 5M105.500 5q3 4 0 8" /><path d="M108 3q4 6 0 12" stroke="#8a93a5" />
          </svg>
          <Txt $s={12} $ls={-0.5} $c="#fff" style={{ marginLeft: 10, width: 20 }}>ESP</Txt>
          <Clock>19:28<br />10/12/2022</Clock>
          <svg width="16" height="16" viewBox="0 0 16 16" fill="none" stroke="#fff" strokeWidth="1.200" style={{ marginLeft: 17 }}><path d="M.500.500h15v11h-5L8 14.500l-2.500-3h-5z" /></svg>
        </Tray>
      </Taskbar>
      <Watermark><div>Activar Windows</div><div>Ve a Configuración para activar Windows.</div></Watermark>
    </Window>
  );
}
